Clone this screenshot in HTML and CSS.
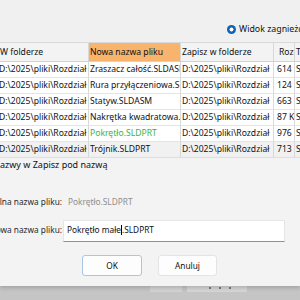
FILE: index.html
```html
<!DOCTYPE html>
<html lang="pl">
<head>
<meta charset="utf-8">
<title>Zapisz pod nazwą</title>
<link rel="stylesheet" href="styles.css">
</head>
<body>
<div class="page">
  <div class="topbar">
    <span class="radio-dot"></span>
    <span class="radio-label">Widok zagnieżdżony</span>
  </div>
  <div class="table">
    <div class="row head">
      <div class="c c1">W folderze</div>
      <div class="c c2 hl">Nowa nazwa pliku</div>
      <div class="c c3">Zapisz w folderze</div>
      <div class="c c4">Rozmiar</div>
      <div class="c c5">Typ</div>
    </div>
    <div class="row">
      <div class="c c1">D:\2025\pliki\Rozdział</div>
      <div class="c c2">Zraszacz całość.SLDASM</div>
      <div class="c c3">D:\2025\pliki\Rozdział</div>
      <div class="c c4">614 KB</div>
      <div class="c c5">SOLIDWORKS</div>
    </div>
    <div class="row">
      <div class="c c1">D:\2025\pliki\Rozdział</div>
      <div class="c c2">Rura przyłączeniowa.SLDPRT</div>
      <div class="c c3">D:\2025\pliki\Rozdział</div>
      <div class="c c4">124 KB</div>
      <div class="c c5">SOLIDWORKS</div>
    </div>
    <div class="row">
      <div class="c c1">D:\2025\pliki\Rozdział</div>
      <div class="c c2">Statyw.SLDASM</div>
      <div class="c c3">D:\2025\pliki\Rozdział</div>
      <div class="c c4">663 KB</div>
      <div class="c c5">SOLIDWORKS</div>
    </div>
    <div class="row">
      <div class="c c1">D:\2025\pliki\Rozdział</div>
      <div class="c c2">Nakrętka kwadratowa.SLDPRT</div>
      <div class="c c3">D:\2025\pliki\Rozdział</div>
      <div class="c c4">87 KB</div>
      <div class="c c5">SOLIDWORKS</div>
    </div>
    <div class="row">
      <div class="c c1">D:\2025\pliki\Rozdział</div>
      <div class="c c2 green">Pokrętło.SLDPRT</div>
      <div class="c c3">D:\2025\pliki\Rozdział</div>
      <div class="c c4">976 KB</div>
      <div class="c c5">SOLIDWORKS</div>
    </div>
    <div class="row sel">
      <div class="c c1">D:\2025\pliki\Rozdział</div>
      <div class="c c2">Trójnik.SLDPRT</div>
      <div class="c c3">D:\2025\pliki\Rozdział</div>
      <div class="c c4">713 KB</div>
      <div class="c c5">SOLIDWORKS</div>
    </div>
  </div>
  <div class="dialog">
    <div class="title">azwy w Zapisz pod nazwą</div>
    <div class="form">
      <div class="label"><span>alna nazwa pliku:</span></div>
      <div class="value">Pokrętło.SLDPRT</div>
      <div class="label l2"><span>owa nazwa pliku:</span></div>
      <div class="input">Pokrętło małe<span class="caret"></span>.SLDPRT</div>
    </div>
    <div class="buttons">
      <div class="btn default">OK</div>
      <div class="btn">Anuluj</div>
    </div>
  </div>
  <div class="strip">
    <div class="strip-a"></div>
    <div class="strip-b"></div>
    <div class="strip-c"><span class="dot"></span><span class="dot"></span><span class="dot"></span></div>
  </div>
</div>
</body>
</html>
```
FILE: styles.css
```css
html, body {
  margin: 0;
  padding: 0;
  overflow: hidden;
}
body {
  width: 300px;
  height: 300px;
  background: #f0f0f0;
  font-family: "Noto Sans", "Open Sans", sans-serif;
  font-size: 8.3px;
  color: #111111;
}
.page {
  display: flex;
  flex-direction: column;
  height: 300px;
  width: 300px;
}
.topbar {
  box-sizing: border-box;
  height: 43px;
  padding-top: 24px;
  padding-left: 227px;
  display: flex;
  align-items: flex-start;
  border-bottom: 1px solid #d9d9d9;
  background: #f0f0f0;
  white-space: nowrap;
  overflow: hidden;
}
.radio-dot {
  flex: none;
  width: 9px;
  height: 9px;
  margin-top: 0.5px;
  border-radius: 50%;
  background: radial-gradient(circle, #ffffff 0 1.7px, #0f63b8 2.3px);
}
.radio-label {
  margin-left: 3px;
  line-height: 10px;
  font-size: 8.8px;
}
.table {
  background: #ffffff;
  margin-left: -3px;
  width: 303px;
  font-size: 8.6px;
}
.row {
  box-sizing: border-box;
  display: grid;
  grid-template-columns: 92px 92px 93px 21px 1fr;
  height: 16px;
  border-bottom: 1px solid #e4e4e4;
}
.row.head {
  height: 19px;
  background: #f3f3f3;
  border-bottom: 1px solid #d2d2d2;
}
.row.sel {
  background: #f1f1f1;
}
.c {
  border-right: 1px solid #d8d8d8;
  overflow: hidden;
  white-space: nowrap;
  line-height: 15px;
}
.head .c {
  line-height: 18px;
}
.c1 { padding-left: 2px; }
.head .c1 { padding-left: 3px; }
.c2 { padding-left: 1px; }
.c3 { padding-left: 1px; }
.c4 { padding-left: 3px; }
.head .c4 { padding-left: 5px; }
.c5 { padding-left: 1px; border-right: none; }
.hl {
  background: #f8b46d;
}
.green {
  color: #3cb43c;
}
.dialog {
  position: relative;
  z-index: 1;
  box-sizing: border-box;
  height: 128px;
  display: flex;
  flex-direction: column;
  background: #f3f3f3;
  box-shadow: 0 2px 4px rgba(0, 0, 0, 0.18);
}
.title {
  height: 14px;
  line-height: 14px;
  font-size: 9px;
  color: #111111;
  white-space: nowrap;
}
.form {
  margin-top: 22px;
  display: grid;
  grid-template-columns: 63px 222px;
  grid-template-rows: 16px 22px;
  row-gap: 10px;
  color: #2a2a2a;
}
.label {
  display: flex;
  justify-content: flex-end;
  line-height: 16px;
  white-space: nowrap;
  padding-right: 1px;
}
.label.l2 {
  line-height: 19px;
}
.value {
  padding-left: 5px;
  line-height: 16px;
  color: #8e8e8e;
}
.input {
  box-sizing: border-box;
  height: 22px;
  background: #ffffff;
  border: 1px solid #e6e6e6;
  border-bottom: 1px solid #6f97c2;
  padding-left: 3px;
  line-height: 17px;
  color: #111111;
  white-space: nowrap;
}
.caret {
  display: inline-block;
  width: 0;
  height: 10px;
  border-left: 1px solid #000;
  vertical-align: -2px;
}
.buttons {
  margin-top: 13px;
  padding-left: 82px;
  display: flex;
  gap: 16px;
}
.btn {
  box-sizing: border-box;
  width: 59px;
  height: 21px;
  display: flex;
  align-items: center;
  justify-content: center;
  background: #fdfdfd;
  border: 1px solid #e4e4e4;
  border-radius: 3px;
  color: #111111;
}
.btn.default {
  width: 60px;
  border-color: #a9c6e4;
}
.strip {
  flex: 1;
  display: flex;
  align-items: flex-start;
  background: #c5c5c5;
}
.strip-a {
  width: 150px;
  height: 14px;
}
.strip-b {
  width: 32px;
  height: 6px;
  background: #d3d3d3;
}
.strip-c {
  margin-left: 5px;
  width: 60px;
  height: 6px;
  background: #d6d6d6;
  display: flex;
  gap: 8px;
  padding-left: 22px;
  box-sizing: border-box;
}
.dot {
  width: 2px;
  height: 2px;
  margin-top: 1px;
  background: #7a7a7a;
}
```
